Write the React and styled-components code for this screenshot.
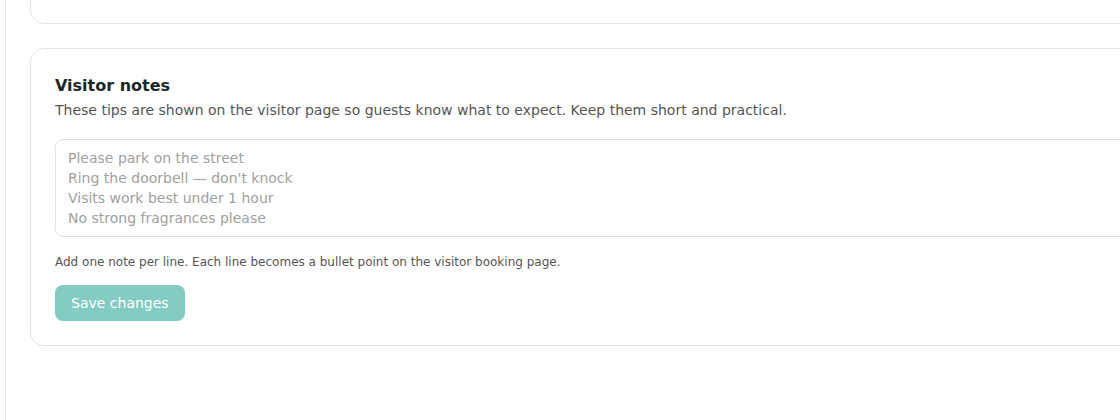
import React from "react";
import styled, { createGlobalStyle } from "styled-components";

const Global = createGlobalStyle`
  html, body { margin: 0; padding: 0; background: #fff; overflow: hidden; }
  body { font-family: "DejaVu Sans", "Liberation Sans", sans-serif; }
  * { box-sizing: border-box; }
`;

const Shell = styled.div`
  display: flex;
  width: 1120px;
  height: 420px;
  overflow: hidden;
`;

const Sidebar = styled.aside`
  flex: 0 0 6px;
  border-right: 1px solid #e6e6e6;
`;

const Main = styled.main`
  flex: 0 0 auto;
  width: 1200px;
  padding: 0 0 0 24px;
  margin-top: -40px;
  display: flex;
  flex-direction: column;
  gap: 24px;
`;

const Card = styled.section`
  border: 1px solid #e4e4e4;
  border-radius: 14px;
  background: #fff;
  padding: ${(p) => (p.$empty ? "0" : "24px")};
  height: ${(p) => (p.$empty ? "64px" : "auto")};
`;

const Title = styled.h2`
  margin: 1px 0 0;
  font-size: 16px;
  line-height: 24px;
  font-weight: 700;
  color: #1c2626;
`;

const Description = styled.p`
  margin: 0;
  font-size: 14px;
  line-height: 24px;
  color: #555;
`;

const NotesArea = styled.textarea`
  display: block;
  width: 100%;
  height: 98px;
  margin-top: 17px;
  padding: 8px 12px;
  border: 1px solid #e2e2e2;
  border-radius: 8px;
  font-family: "DejaVu Sans", "Liberation Sans", sans-serif;
  font-size: 14px;
  line-height: 20px;
  color: #333;
  resize: none;
  outline: none;
  &::placeholder { color: #a0a0a0; }
`;

const Hint = styled.p`
  margin: 16px 0 0;
  font-size: 12px;
  line-height: 18px;
  color: #555;
`;

const SaveButton = styled.button`
  margin-top: 14px;
  height: 36px;
  padding: 0 16px;
  border: none;
  border-radius: 8px;
  background: #84cbc1;
  color: #fff;
  font-family: "DejaVu Sans", "Liberation Sans", sans-serif;
  font-size: 14px;
  cursor: not-allowed;
`;

const placeholder = [
  "Please park on the street",
  "Ring the doorbell \u2014 don't knock",
  "Visits work best under 1 hour",
  "No strong fragrances please",
].join("\n");

export default function App() {
  return (
    <>
      <Global />
      <Shell>
        <Sidebar />
        <Main>
          <Card $empty />
          <Card>
            <Title>Visitor notes</Title>
            <Description>
              These tips are shown on the visitor page so guests know what to expect. Keep them short and practical.
            </Description>
            <NotesArea placeholder={placeholder} />
            <Hint>Add one note per line. Each line becomes a bullet point on the visitor booking page.</Hint>
            <div>
              <SaveButton disabled>Save changes</SaveButton>
            </div>
          </Card>
        </Main>
      </Shell>
    </>
  );
}
